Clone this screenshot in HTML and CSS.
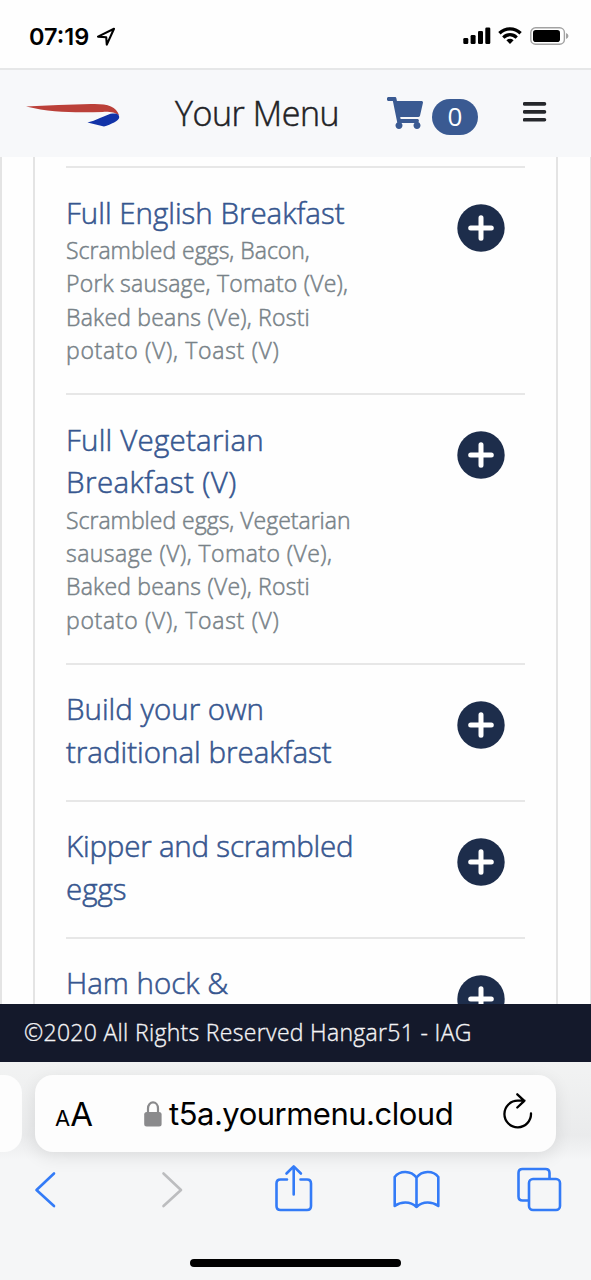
FILE: index.html
```html
<!DOCTYPE html>
<html lang="en">
<head>
<meta charset="utf-8">
<title>Your Menu</title>
<link rel="stylesheet" href="styles.css">
</head>
<body>
<div class="phone">
  <div class="status">
    <span class="time">07:19</span>
    <svg class="locate" width="20" height="20" viewBox="0 0 20 20"><path d="M2 9.6 18 1.8 10.8 17.6 10.2 10.2Z" fill="none" stroke="#000" stroke-width="2.1" stroke-linejoin="round"/></svg>
    <svg class="signals" width="108" height="20" viewBox="0 0 108 20">
      <rect x="0.3" y="12" width="5" height="6" rx="1.3"/><rect x="7.6" y="9" width="5" height="9" rx="1.3"/><rect x="15" y="5" width="5" height="13" rx="1.3"/><rect x="22.3" y="1.5" width="5" height="16.5" rx="1.3"/>
      <g fill="none" stroke="#000" stroke-width="3.3"><path d="M36.4 7.3C42.5 1.4 51.5 1.4 57.6 7.3"/><path d="M40.3 11.6C44.3 7.8 49.7 7.8 53.7 11.6"/></g>
      <path d="M43.4 14.2Q47 11.4 50.6 14.2L47 18Z"/>
      <rect x="67.8" y="1.8" width="33.6" height="16.4" rx="4.8" fill="none" stroke="#a2a2a2" stroke-width="1.4"/>
      <rect x="70" y="4" width="27" height="12" rx="2.8"/>
      <path d="M103 7Q105.500 8 105.500 10T103 13Z" fill="#a2a2a2"/>
    </svg>
  </div>
  <header class="topbar">
    <svg class="logo" width="96" height="28" viewBox="0 0 96 28"><path d="M1 6.400C22 5.300 45 4.700 66 4C82 3.500 91 6 94.200 15.500C90 12.500 86 11.700 78 11.900C54 12.500 28 13 1 6.400Z" fill="#bb4039"/><path d="M62.500 22.500C71 20.500 78 16.500 85.500 13.800C91 12.600 94.500 14 94.200 17.500C94 20.500 86 24.500 79 26.600Z" fill="#1233a8"/></svg>
    <h1 class="heading">Your Menu</h1>
    <svg class="cart" width="36" height="32" viewBox="0 0 576 512"><path fill="#3a5a92" d="M528.100 301.300l47.300-208C578.800 78.300 567.400 64 552 64H159.200l-9.200-44.800C147.800 8 137.900 0 126.500 0H24C10.700 0 0 10.700 0 24v16c0 13.300 10.700 24 24 24h69.900l70.200 343.400C147.300 417.100 136 435.200 136 456c0 30.900 25.100 56 56 56s56-25.100 56-56c0-15.700-6.400-29.800-16.800-40h209.600C430.400 426.200 424 440.300 424 456c0 30.900 25.100 56 56 56s56-25.100 56-56c0-22.200-12.900-41.300-31.600-50.400l5.500-24.300c3.400-15-8-29.300-23.400-29.300H218.100l-6.500-32h293.100c11.200 0 20.900-7.800 23.400-18.700z"/></svg>
    <span class="badge">0</span>
    <svg class="burger" width="24" height="22" viewBox="0 0 24 22"><path d="M1.500 2.900h20M1.500 10.900h20M1.500 18.800h20" stroke="#25272b" stroke-width="3.600" stroke-linecap="round"/></svg>
  </header>
  <main class="page">
    <div class="panel">
      <article class="item"><div class="copy"><h2 class="name">Full English Breakfast</h2><p class="desc">Scrambled eggs, Bacon,<br><span class="loose">Pork sausage, Tomato (Ve),</span><br><span class="loose">Baked beans (Ve), Rosti</span><br><span class="loosest">potato (V), Toast (V)</span></p></div><svg class="plus" viewBox="0 0 48 48"><use href="#add"/></svg></article>
      <article class="item"><div class="copy"><h2 class="name"><span class="loose">Full Vegetarian</span><br><span class="looser">Breakfast (V)</span></h2><p class="desc">Scrambled eggs, Vegetarian<br><span class="looser">sausage (V), Tomato (Ve),</span><br><span class="loose">Baked beans (Ve), Rosti</span><br><span class="loosest">potato (V), Toast (V)</span></p></div><svg class="plus" viewBox="0 0 48 48"><use href="#add"/></svg></article>
      <article class="item"><div class="copy"><h2 class="name">Build your own<br>traditional breakfast</h2></div><svg class="plus" viewBox="0 0 48 48"><use href="#add"/></svg></article>
      <article class="item"><div class="copy"><h2 class="name"><span class="tight">Kipper and scrambled</span><br>eggs</h2></div><svg class="plus" viewBox="0 0 48 48"><use href="#add"/></svg></article>
      <article class="item"><div class="copy"><h2 class="name">Ham hock &amp;</h2></div><svg class="plus" viewBox="0 0 48 48"><g id="add"><circle cx="24" cy="24" r="23.700" fill="#1d2d4b"/><path d="M24 13.700v20.600M13.700 24h20.600" stroke="#fff" stroke-width="5" stroke-linecap="round"/></g></svg></article>
    </div>
  </main>
  <footer class="legal">©2020 All Rights Reserved Hangar51 - IAG</footer>
  <div class="browser">
    <div class="tabs">
      <div class="prev"></div>
      <div class="address">
        <span class="aa"><small class="small-a">A</small>A</span>
        <svg class="lock" width="20" height="28" viewBox="0 0 20 28"><path d="M5 13V8.500C5 .3 15 .3 15 8.500V13" fill="none" stroke="#8a8a8c" stroke-width="2.200"/><rect x="1.200" y="12" width="17.400" height="14.500" rx="2.500" fill="#8a8a8c"/></svg>
        <span class="url">t5a.yourmenu.cloud</span>
        <svg class="reload" width="32" height="38" viewBox="0 0 32 38"><path d="M29 21.500A13.300 13.300 0 1 1 16 8.700h6.500M15.300 2.300l7 6.500-7 6.700" fill="none" stroke="#000" stroke-width="2.300" stroke-linecap="round" stroke-linejoin="round"/></svg>
      </div>
    </div>
    <nav class="tools">
      <svg width="591" height="56" viewBox="0 1160 591 56" fill="none" stroke="#337bf7" stroke-width="2.600" stroke-linecap="round" stroke-linejoin="round">
        <path d="M54 1173.500 36.500 1190 54 1206"/>
        <path d="M163.500 1173.500 181 1190 163.500 1206" stroke="#bcbdbf"/>
        <path d="M287 1179.500h-6.500q-4 0-4 4v22.500q0 4 4 4h26.500q4 0 4-4v-22.500q0-4-4-4h-6.500M293.700 1194.500v-28M286.500 1173.500l7.200-7.200 7.200 7.200"/>
        <path d="M416.500 1207V1177.500M416.500 1177.500C411 1170.500 400 1170 394.700 1177V1206C401 1201.500 410 1201 416.500 1207 423 1201 432 1201.500 438.300 1206V1177C433 1170 422 1170.500 416.500 1177.500Z"/>
        <path d="M528 1200.500h-5.500q-4 0-4-4v-23.500q0-4 4-4h23q4 0 4 4v5.300"/><rect x="529" y="1179" width="31" height="31" rx="4"/>
      </svg>
    </nav>
    <div class="home"></div>
  </div>
</div>
</body>
</html>
```
FILE: styles.css
```css
* { box-sizing: border-box; }
body { margin: 0; font-family: "Open Sans", "Noto Sans", sans-serif; }
h1, h2, p { margin: 0; font-weight: 400; }
svg { display: block; flex: none; }
.phone { width: 591px; height: 1280px; display: flex; flex-direction: column; overflow: hidden; background: #fefefe; }

.status { flex: none; height: 70px; border-bottom: 2px solid #e6e7e8; display: flex; align-items: flex-start; padding: 22px 20px 0 29px; font-family: Inter, sans-serif; }
.time { font-size: 23.5px; line-height: 29px; font-weight: 600; letter-spacing: 0; width: 67px; }
.locate { margin-top: 5px; }
.signals { margin: 4px 0 0 auto; }

.topbar { flex: none; height: 87px; background: #f7f8fa; display: flex; align-items: flex-start; padding-left: 25px; }
.logo { margin-top: 30px; }
.heading { color: #212225; font-size: 34px; font-weight: 300; -webkit-text-stroke: 0.5px #212225; letter-spacing: -0.45px; line-height: 44px; margin: 21px 0 0 54px; width: 212px; white-space: nowrap; }
.cart { margin-top: 27px; }
.badge { margin: 29px 0 0 9px; width: 46px; height: 36px; border-radius: 18px; background: #3a5a92; color: #fff; font-size: 26px; line-height: 34px; text-align: center; }
.burger { margin: 31px 0 0 45px; }

.page { flex: none; height: 847px; overflow: hidden; padding: 0 32px 0 31px; border: solid #e4e4e4; border-width: 0 1px 0 2px; }
.panel { height: 100%; border: solid #e4e4e4; border-width: 0 2px; padding: 9px 31px 0; overflow: hidden; }
.item { border-top: 2px solid #e7e7e7; padding: 23.5px 20px 26px 0; display: flex; justify-content: space-between; align-items: flex-start; }
.name { color: #36568f; font-size: 29.500px; line-height: 42.700px; font-weight: 300; -webkit-text-stroke: 0.55px #36568f; white-space: nowrap; }
.desc { color: #788288; font-size: 23px; line-height: 33.200px; white-space: nowrap; font-weight: 300; -webkit-text-stroke: 0.5px #788288; }
.loose { letter-spacing: 0.22px; }
.looser { letter-spacing: 0.45px; }
.loosest { letter-spacing: 0.7px; }
.tight { letter-spacing: -0.2px; }
.plus { width: 48px; height: 48px; margin: 12.5px 0.5px 0 0; }

.legal { flex: none; height: 58px; background: #14192b; color: #f4f4f6; font-size: 23px; font-weight: 300; -webkit-text-stroke: 0.35px #f4f4f6; line-height: 56px; padding-left: 24px; white-space: nowrap; letter-spacing: 0.31px; }

.browser { flex: 1; background: #f5f6f7; display: flex; flex-direction: column; }
.tabs { height: 98px; padding-top: 13px; display: flex; gap: 13px; background: linear-gradient(#f2f3f3, #eaebec 75%, #f5f6f7); }
.prev { width: 22px; height: 77px; background: #fdfdfd; border-radius: 0 18px 18px 0; }
.address { width: 521px; height: 77px; background: #fdfdfd; border-radius: 18px; display: flex; align-items: flex-start; padding-left: 20px; font-family: Inter, sans-serif; box-shadow: 0 5px 18px rgba(0, 0, 0, .09); }
.aa { font-size: 33px; line-height: 40px; margin-top: 19px; width: 88px; white-space: nowrap; }
.small-a { font-size: 22px; }
.lock { margin-top: 25px; }
.url { font-size: 31px; line-height: 40px; margin: 19px 0 0 6px; width: 333px; white-space: nowrap; letter-spacing: -0.5px; }
.reload { margin-top: 17px; }
.tools { height: 56px; }
.home { width: 211px; height: 8px; border-radius: 4px; background: #000; margin: 43px auto 0; }
```
